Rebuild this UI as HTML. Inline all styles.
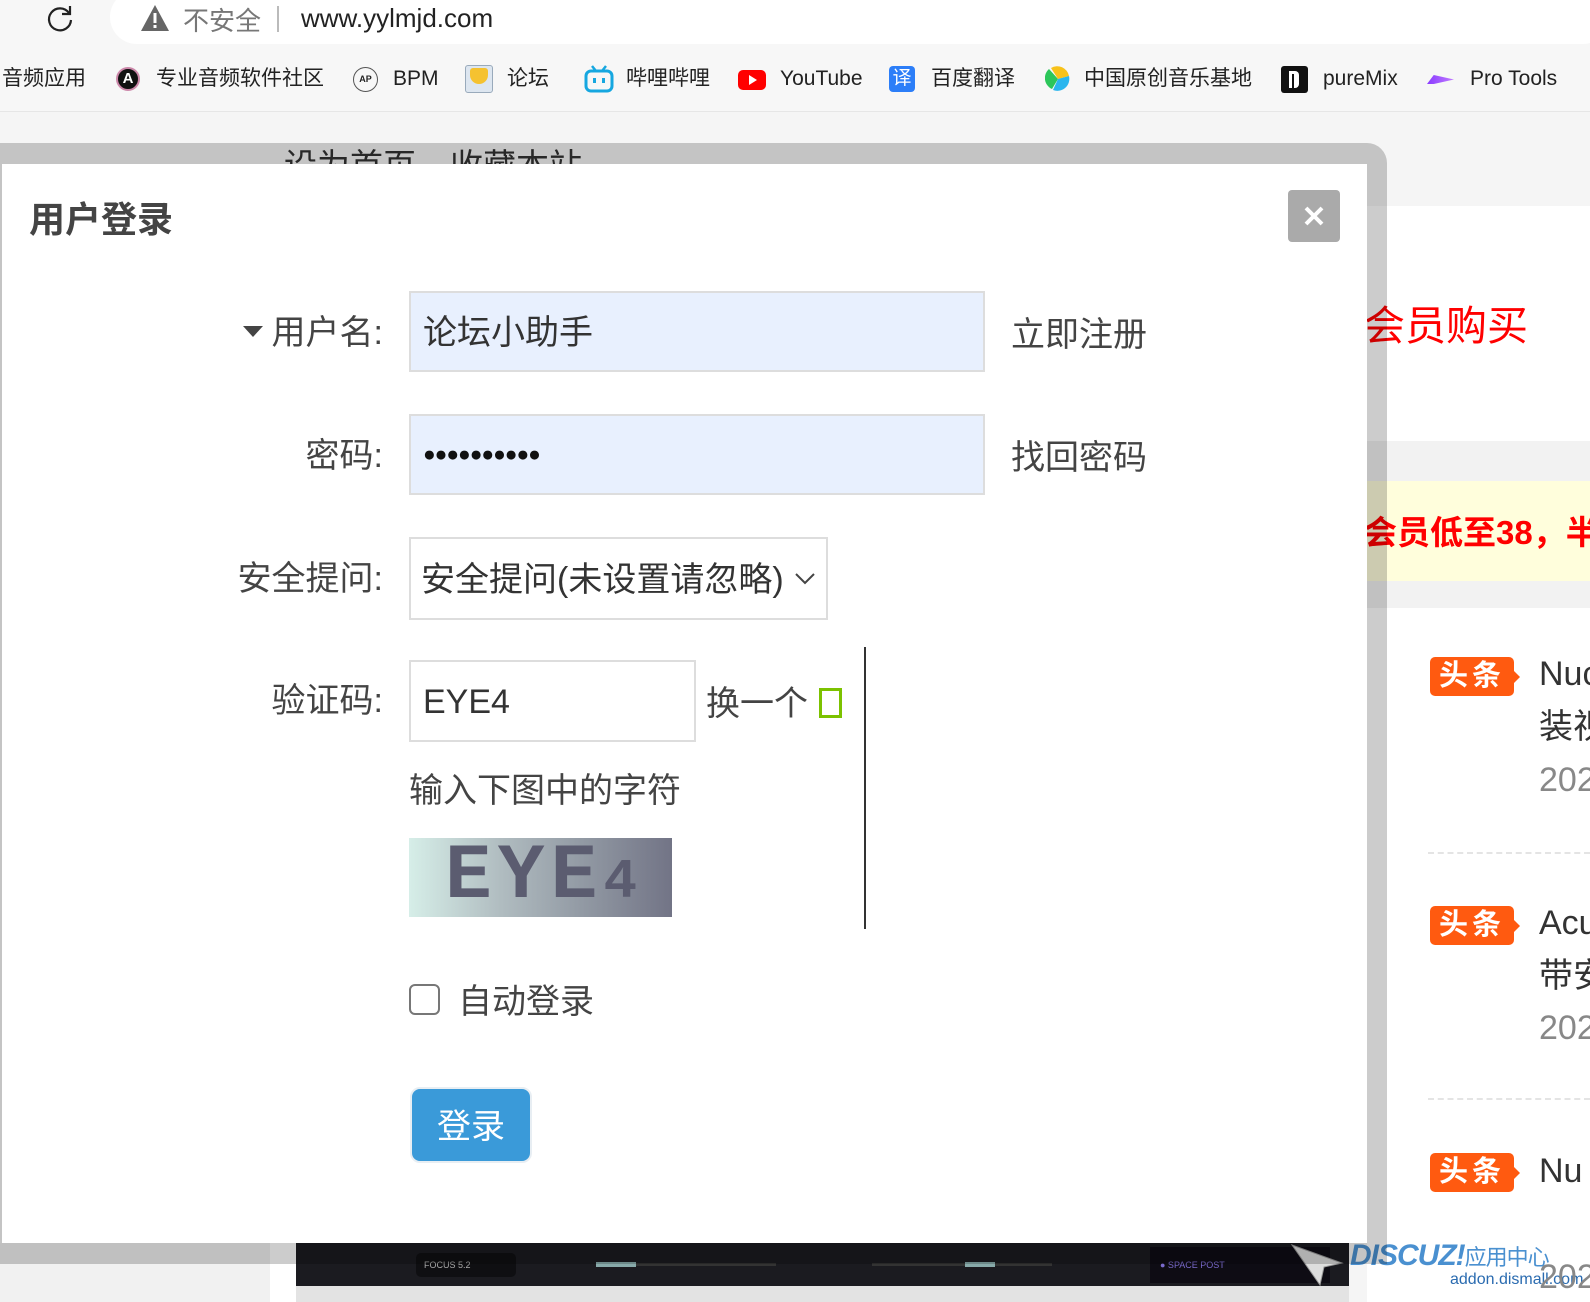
<!DOCTYPE html>
<html><head><meta charset="utf-8">
<style>
*{margin:0;padding:0;box-sizing:border-box}
body{width:1590px;height:1302px;overflow:hidden;background:#f5f5f5;font-family:"Liberation Sans","Noto Sans CJK SC",sans-serif;position:relative;color:#333}
.a{position:absolute}
.bm{position:absolute;top:66px;font-size:21px;color:#222;line-height:26px;white-space:nowrap}
.lbl{position:absolute;right:1207px;font-size:34px;color:#444;white-space:nowrap;line-height:40px}
.inp{position:absolute;border:2px solid #ddd;font-size:34px;color:#333;padding-left:12px}
.badge{position:absolute;left:1430px;width:84px;height:39px;background:#ff5a10;border-radius:5px;color:#fff;font-weight:bold;font-size:29px;line-height:39px;text-align:center;letter-spacing:4px}
.badge:after{content:"";position:absolute;right:-6px;top:13px;border-left:7px solid #ff5a10;border-top:7px solid transparent;border-bottom:7px solid transparent}
.rt{position:absolute;left:1539px;font-size:34px;color:#333;white-space:nowrap;line-height:40px}
.dt{position:absolute;left:1539px;font-size:34px;color:#888;line-height:40px}
</style></head><body>
<div class="a" style="left:0;top:0;width:1590px;height:112px;background:#f7f7f7;border-bottom:1px solid #e6e6e6"></div>
<svg class="a" style="left:44px;top:3px" width="32" height="32" viewBox="0 0 32 32"><path d="M25 10 A11 11 0 1 0 27 17" fill="none" stroke="#222" stroke-width="2.2"/><path d="M26 3 V11 H18" fill="none" stroke="#222" stroke-width="2.2"/></svg>
<div class="a" style="left:110px;top:-10px;width:1500px;height:54px;background:#fff;border-radius:27px"></div>
<svg class="a" style="left:140px;top:4px" width="30" height="28" viewBox="0 0 30 28"><path d="M15 1 L29 27 H1 Z" fill="#666"/><rect x="13.5" y="9" width="3" height="10" fill="#fff"/><rect x="13.5" y="21" width="3" height="3" fill="#fff"/></svg>
<div class="a" style="left:183px;top:1px;font-size:26px;color:#777">不安全</div>
<div class="a" style="left:277px;top:6px;width:2px;height:26px;background:#bbb"></div>
<div class="a" style="left:301px;top:3px;font-size:26px;color:#222">www.yylmjd.com</div>

<div class="bm" style="left:2px">音频应用</div>
<div class="a" style="left:116px;top:67px;width:24px;height:24px;border-radius:50%;background:#111;border:2px solid #c8a;color:#fff;font-size:15px;font-weight:bold;text-align:center;line-height:20px">A</div>
<div class="bm" style="left:156px">专业音频软件社区</div>
<div class="a" style="left:353px;top:67px;width:25px;height:25px;border-radius:50%;border:1.5px solid #555;font-size:9px;font-weight:bold;text-align:center;line-height:22px;color:#222">AP</div>
<div class="bm" style="left:393px">BPM</div>
<div class="a" style="left:465px;top:65px;width:28px;height:28px;background:#dde6f0;border:1px solid #9ab;border-radius:3px"><div style="position:absolute;left:4px;top:2px;width:18px;height:16px;background:#f5c230;border-radius:3px 3px 9px 9px"></div></div>
<div class="bm" style="left:507px">论坛</div>
<svg class="a" style="left:583px;top:64px" width="32" height="30" viewBox="0 0 32 30"><path d="M9 2 L13 7 M23 2 L19 7" stroke="#16a7e0" stroke-width="2.5"/><rect x="3" y="7" width="26" height="20" rx="5" fill="none" stroke="#16a7e0" stroke-width="3"/><rect x="10" y="14" width="3" height="5" fill="#16a7e0"/><rect x="19" y="14" width="3" height="5" fill="#16a7e0"/></svg>
<div class="bm" style="left:626px">哔哩哔哩</div>
<div class="a" style="left:738px;top:70px;width:28px;height:20px;background:#f00;border-radius:5px"><div style="position:absolute;left:11px;top:5px;border-left:8px solid #fff;border-top:5px solid transparent;border-bottom:5px solid transparent"></div></div>
<div class="bm" style="left:780px">YouTube</div>
<div class="a" style="left:889px;top:66px;width:26px;height:26px;background:#2c7ef8;border-radius:4px;color:#fff;font-size:19px;text-align:center;line-height:26px">译</div>
<div class="bm" style="left:931px">百度翻译</div>
<svg class="a" style="left:1045px;top:66px" width="26" height="26" viewBox="0 0 26 26"><path d="M13 13 L4 3 A12 12 0 0 0 7 23 Z" fill="#2cc65a"/><path d="M13 13 L6 2 A12 12 0 0 1 24 10 Z" fill="#f8c21a"/><path d="M13 13 L24 10 A12 12 0 0 1 8 24 Z" fill="#2ab6ee"/></svg>
<div class="bm" style="left:1084px">中国原创音乐基地</div>
<div class="a" style="left:1281px;top:66px;width:27px;height:27px;background:#111;border-radius:3px"><div style="position:absolute;left:8px;top:5px;width:10px;height:17px;border:3px solid #fff;border-right-width:5px;border-radius:0 4px 4px 0;border-bottom:none"></div></div>
<div class="bm" style="left:1323px">pureMix</div>
<div class="a" style="left:1427px;top:75px;width:27px;height:9px;background:linear-gradient(90deg,#8a3cff,#c07aff);clip-path:polygon(0 100%,25% 0,100% 50%,25% 100%)"></div>
<div class="bm" style="left:1470px">Pro Tools</div>

<div class="a" style="left:1367px;top:206px;width:223px;height:235px;background:#fff"></div>
<div class="a" style="left:1367px;top:441px;width:223px;height:167px;background:#f2f2f2"></div>
<div class="a" style="left:1367px;top:481px;width:223px;height:100px;background:#fffedc"></div>
<div class="a" style="left:1367px;top:608px;width:223px;height:694px;background:#fff"></div>
<div class="a" style="left:1364px;top:292px;font-size:41px;color:#f00;white-space:nowrap">会员购买</div>
<div class="a" style="left:1364px;top:506px;font-size:33px;font-weight:bold;color:#f00;white-space:nowrap">会员低至38，半</div>
<div class="badge" style="top:657px">头条</div>
<div class="rt" style="top:654px">Nuc</div><div class="rt" style="top:707px">装视</div><div class="dt" style="top:760px">202</div>
<div class="a" style="left:1428px;top:852px;width:162px;border-top:2px dashed #e4e4e4"></div>
<div class="badge" style="top:906px">头条</div>
<div class="rt" style="top:903px">Acu</div><div class="rt" style="top:956px">带安</div><div class="dt" style="top:1008px">202</div>
<div class="a" style="left:1428px;top:1098px;width:162px;border-top:2px dashed #e4e4e4"></div>
<div class="badge" style="top:1153px">头条</div>
<div class="rt" style="top:1151px">Nu</div>

<div class="a" style="left:0;top:1243px;width:270px;height:59px;background:#f1f1f1"></div>
<div class="a" style="left:270px;top:1243px;width:26px;height:59px;background:#fff"></div>
<div class="a" style="left:296px;top:1243px;width:1053px;height:43px;background:#1b1b20"></div>
<div class="a" style="left:296px;top:1286px;width:1053px;height:16px;background:#e3e3e3"></div>
<div class="a" style="left:416px;top:1253px;width:100px;height:24px;background:#0f0f12;border-radius:5px;color:#aaa;font-size:9px;line-height:24px;padding-left:8px">FOCUS 5.2</div>
<div class="a" style="left:596px;top:1263px;width:180px;height:3px;background:#333"></div>
<div class="a" style="left:596px;top:1262px;width:40px;height:5px;background:#8aa"></div>
<div class="a" style="left:872px;top:1263px;width:180px;height:3px;background:#333"></div>
<div class="a" style="left:965px;top:1262px;width:30px;height:5px;background:#8aa"></div>
<div class="a" style="left:1150px;top:1247px;width:180px;height:36px;background:#0e0c14;color:#7a6acc;font-size:9px;line-height:36px;padding-left:10px">● SPACE POST</div>
<svg class="a" style="left:1290px;top:1243px" width="56" height="45" viewBox="0 0 56 45"><path d="M2 2 L52 20 L34 24 L30 42 Z" fill="#ddd" stroke="#999"/></svg>
<div class="a" style="left:1350px;top:1239px;font-size:30px;font-weight:bold;font-style:italic;color:#4a90d0;white-space:nowrap;letter-spacing:-1px">DISCUZ!<span style="font-size:22px;font-weight:normal;font-style:normal">应用中心</span></div>
<div class="a" style="left:1450px;top:1271px;font-size:16px;color:#2a6bb0">addon.dismall.com</div>
<div class="a" style="left:1539px;top:1258px;font-size:34px;color:#888">202</div>

<div class="a" style="left:284px;top:139px;font-size:33px;color:#333;white-space:nowrap">设为首页<span style="display:inline-block;width:34px"></span>收藏本站</div>
<div class="a" style="left:0;top:143px;width:1387px;height:1121px;background:rgba(0,0,0,0.2);border-radius:0 20px 0 0"></div>
<div class="a" style="left:2px;top:164px;width:1365px;height:1079px;background:#fff"></div>
<div class="a" style="left:29px;top:191px;font-size:36px;font-weight:bold;color:#444">用户登录</div>
<div class="a" style="left:1288px;top:190px;width:52px;height:52px;background:#aaa;border-radius:4px"><svg width="52" height="52" viewBox="0 0 52 52"><path d="M18 18 L34 34 M34 18 L18 34" stroke="#fff" stroke-width="4"/></svg></div>

<div class="a" style="left:243px;top:326px;border-top:11px solid #444;border-left:10px solid transparent;border-right:10px solid transparent"></div>
<div class="lbl" style="top:313px">用户名:</div>
<div class="inp" style="left:409px;top:291px;width:576px;height:81px;background:#e8f0fe;line-height:80px">论坛小助手</div>
<div class="a" style="left:1011px;top:307px;font-size:34px;color:#444">立即注册</div>

<div class="lbl" style="top:436px">密码:</div>
<div class="inp" style="left:409px;top:414px;width:576px;height:81px;background:#e8f0fe;line-height:77px;font-size:21px;letter-spacing:-1px;color:#111">●●●●●●●●●●</div>
<div class="a" style="left:1011px;top:430px;font-size:34px;color:#444">找回密码</div>

<div class="lbl" style="top:559px">安全提问:</div>
<div class="inp" style="left:409px;top:537px;width:419px;height:83px;background:#fff;line-height:82px;padding-left:10px;white-space:nowrap">安全提问(未设置请忽略)</div>
<svg class="a" style="left:794px;top:572px" width="22" height="14" viewBox="0 0 22 14"><path d="M2 2 L11 11 L20 2" fill="none" stroke="#444" stroke-width="2"/></svg>

<div class="lbl" style="top:681px">验证码:</div>
<div class="inp" style="left:409px;top:660px;width:287px;height:82px;background:#fff;line-height:80px">EYE4</div>
<div class="a" style="left:706px;top:676px;font-size:34px;color:#444">换一个</div>
<div class="a" style="left:819px;top:688px;width:23px;height:30px;border:3px solid #7cc200"></div>
<div class="a" style="left:864px;top:647px;width:2px;height:282px;background:#333"></div>
<div class="a" style="left:409px;top:763px;font-size:34px;color:#444">输入下图中的字符</div>
<div class="a" style="left:409px;top:838px;width:263px;height:79px;background:linear-gradient(90deg,#d6eee8,#b0bcc0 35%,#8e95a0 70%,#727486);overflow:hidden"><div style="position:absolute;left:36px;top:-4px;font-family:'Liberation Mono',monospace;font-weight:bold;font-size:78px;color:#5b5c70;letter-spacing:6px;line-height:86px">EYE<span style="font-size:56px">4</span></div></div>

<div class="a" style="left:409px;top:984px;width:31px;height:31px;border:2.5px solid #777;border-radius:6px"></div>
<div class="a" style="left:458px;top:974px;font-size:34px;color:#444">自动登录</div>

<div class="a" style="left:410px;top:1087px;width:122px;height:76px;background:#3a9ad9;border:2px solid #e8eef3;border-radius:10px;color:#fff;font-size:34px;text-align:center;line-height:76px">登录</div>
</body></html>
